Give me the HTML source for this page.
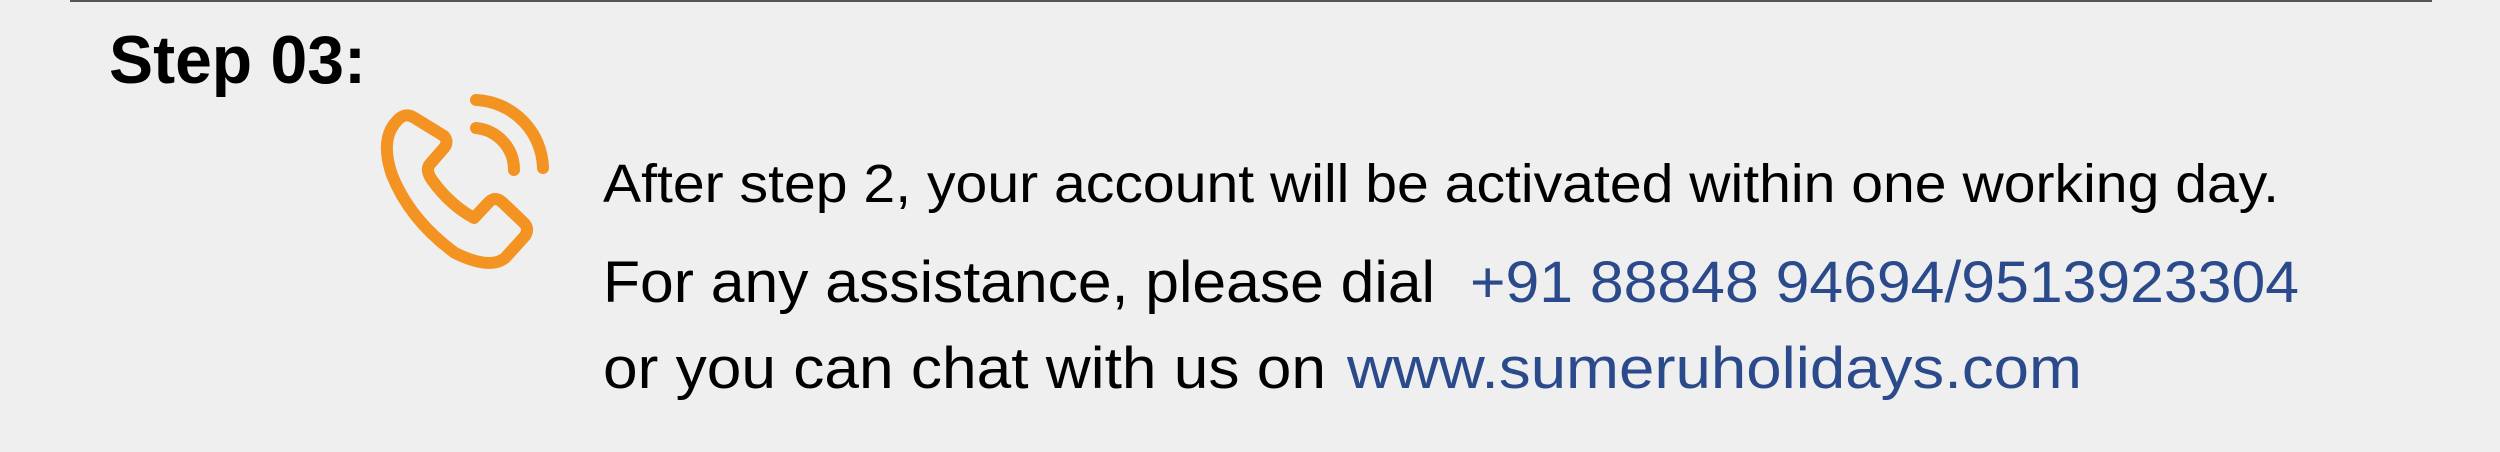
<!DOCTYPE html>
<html><head><meta charset="utf-8"><style>
html,body{margin:0;padding:0;background:#efefef;width:2500px;height:452px;overflow:hidden}
</style></head><body>
<svg width="2500" height="452" viewBox="0 0 2500 452" xmlns="http://www.w3.org/2000/svg">
<rect x="0" y="0" width="2500" height="452" fill="#efefef"/>
<rect x="70" y="0" width="2362" height="2" fill="#555"/>
<text x="109" y="83" font-family="Liberation Sans, sans-serif" font-weight="bold" font-size="68" fill="#000" textLength="257" lengthAdjust="spacingAndGlyphs">Step 03:</text>
<g fill="none" stroke="#f39322" stroke-width="12" stroke-linecap="round" stroke-linejoin="round">
<path d="M413 117 Q404 112 396 122 Q380 140 392 175 Q410 220 455 253 Q490 270 505 258 L525 236 Q530 228 523 222 L502 202 Q495 196 489 202 L474 218 Q450 205 432 180 Q425 170 430 164 L444 148 Q449 142 444 136 Z"/>
<path d="M476 128 A42 42 0 0 1 514 170"/>
<path d="M476 100 A70 70 0 0 1 543 168"/>
</g>
<g font-family="Liberation Sans, sans-serif" fill="#000">
<text x="603" y="202" font-size="54" textLength="1676" lengthAdjust="spacingAndGlyphs">After step 2, your account will be activated within one working day.</text>
<text x="603" y="302" font-size="58" textLength="832" lengthAdjust="spacingAndGlyphs">For any assistance, please dial</text>
<text x="1470" y="302" font-size="58" fill="#2b4a8c" textLength="829" lengthAdjust="spacingAndGlyphs">+91 88848 94694/9513923304</text>
<text x="603" y="388" font-size="58" textLength="723" lengthAdjust="spacingAndGlyphs">or you can chat with us on</text>
<text x="1347" y="388" font-size="58" fill="#2b4a8c" textLength="735" lengthAdjust="spacingAndGlyphs">www.sumeruholidays.com</text>
</g>
</svg>
</body></html>
